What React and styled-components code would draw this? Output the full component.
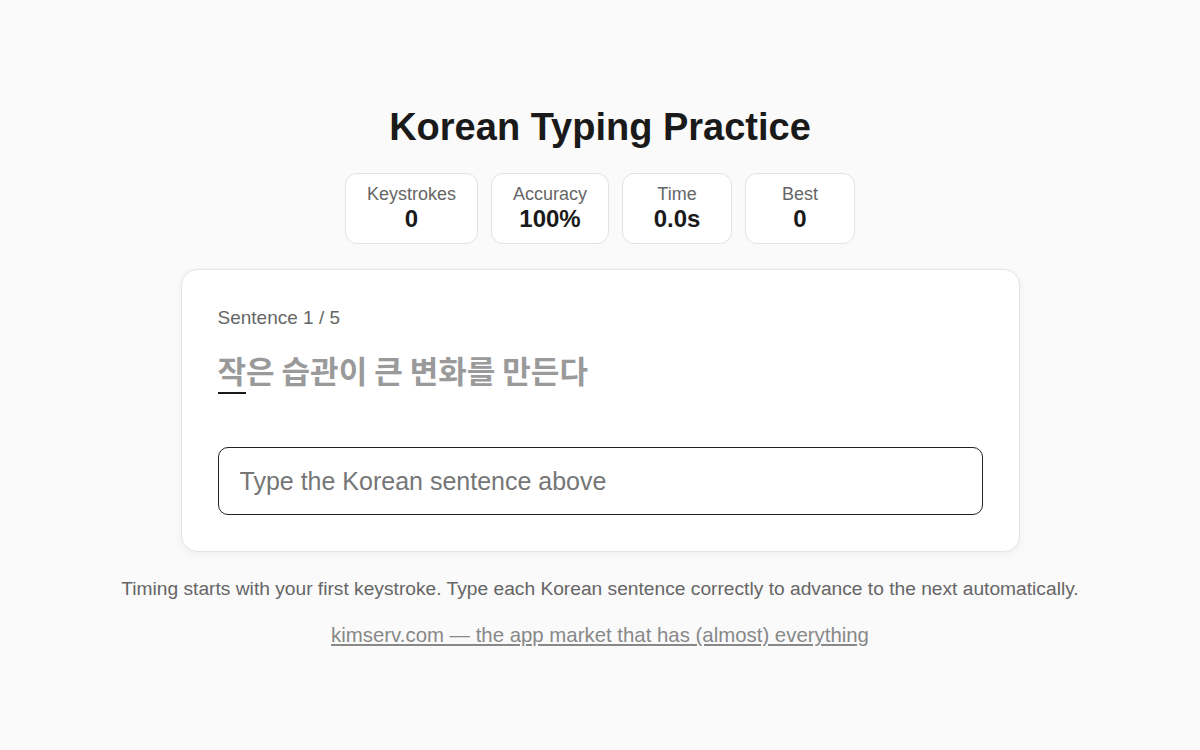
import React from "react";
import styled, { createGlobalStyle } from "styled-components";

const GlobalStyle = createGlobalStyle`
  body {
    margin: 0;
    background: #fafafa;
    font-family: "Liberation Sans", Arial, "Noto Sans CJK KR", sans-serif;
    color: #1a1a1a;
  }
`;

const Page = styled.div`
  min-height: 100vh;
  display: flex;
  flex-direction: column;
  align-items: center;
  justify-content: center;
`;

const Title = styled.h1`
  margin: 0 0 23px 0;
  font-size: 38px;
  font-weight: 700;
  line-height: 46px;
  color: #1a1a1a;
`;

const Stats = styled.div`
  display: flex;
  gap: 13px;
  margin-bottom: 25px;
`;

const Stat = styled.div`
  box-sizing: border-box;
  min-width: 110px;
  height: 71px;
  padding: 9px 21px 0 21px;
  background: #fff;
  border: 1px solid #e2e2e2;
  border-radius: 12px;
  display: flex;
  flex-direction: column;
  align-items: center;
`;

const StatLabel = styled.div`
  font-size: 18px;
  color: #666;
  line-height: 22px;
`;

const StatValue = styled.div`
  font-size: 24px;
  font-weight: 700;
  color: #1a1a1a;
  line-height: 28px;
`;

const Card = styled.div`
  box-sizing: border-box;
  width: 839px;
  padding: 36px;
  background: #fff;
  border: 1px solid #e4e4e4;
  border-radius: 16px;
  box-shadow: 0 2px 8px rgba(0, 0, 0, 0.05);
`;

const Progress = styled.div`
  font-size: 19px;
  color: #666;
  line-height: 24px;
`;

const Sentence = styled.div`
  margin-top: 19px;
  font-family: "Noto Sans CJK KR", sans-serif;
  font-size: 31px;
  font-weight: 700;
  color: #9a9a9a;
  line-height: 42px;
  height: 42px;
`;

const Current = styled.span`
  border-bottom: 2.5px solid #1a1a1a;
`;

const Input = styled.input`
  box-sizing: border-box;
  display: block;
  width: 100%;
  height: 68px;
  margin-top: 56px;
  padding: 0 21px;
  font-family: "Liberation Sans", Arial, "Noto Sans CJK KR", sans-serif;
  font-size: 25px;
  color: #1a1a1a;
  background: #fff;
  border: 1.5px solid #222;
  border-radius: 10px;
  outline: none;
  &::placeholder {
    color: #767676;
  }
`;

const Note = styled.p`
  margin: 26px 0 0 0;
  font-size: 19.2px;
  color: #666;
  line-height: 22px;
`;

const FooterLink = styled.a`
  margin-top: 24px;
  font-size: 20.4px;
  color: #888;
  text-decoration: underline;
  line-height: 22px;
`;

const stats = [
  { label: "Keystrokes", value: "0" },
  { label: "Accuracy", value: "100%" },
  { label: "Time", value: "0.0s" },
  { label: "Best", value: "0" },
];

export default function App() {
  const sentence = "작은 습관이 큰 변화를 만든다";
  return (
    <>
      <GlobalStyle />
      <Page>
        <Title>Korean Typing Practice</Title>
        <Stats>
          {stats.map((s) => (
            <Stat key={s.label}>
              <StatLabel>{s.label}</StatLabel>
              <StatValue>{s.value}</StatValue>
            </Stat>
          ))}
        </Stats>
        <Card>
          <Progress>Sentence 1 / 5</Progress>
          <Sentence>
            <Current>{sentence[0]}</Current>
            {sentence.slice(1)}
          </Sentence>
          <Input placeholder="Type the Korean sentence above" />
        </Card>
        <Note>
          Timing starts with your first keystroke. Type each Korean sentence
          correctly to advance to the next automatically.
        </Note>
        <FooterLink href="#">
          kimserv.com — the app market that has (almost) everything
        </FooterLink>
      </Page>
    </>
  );
}
